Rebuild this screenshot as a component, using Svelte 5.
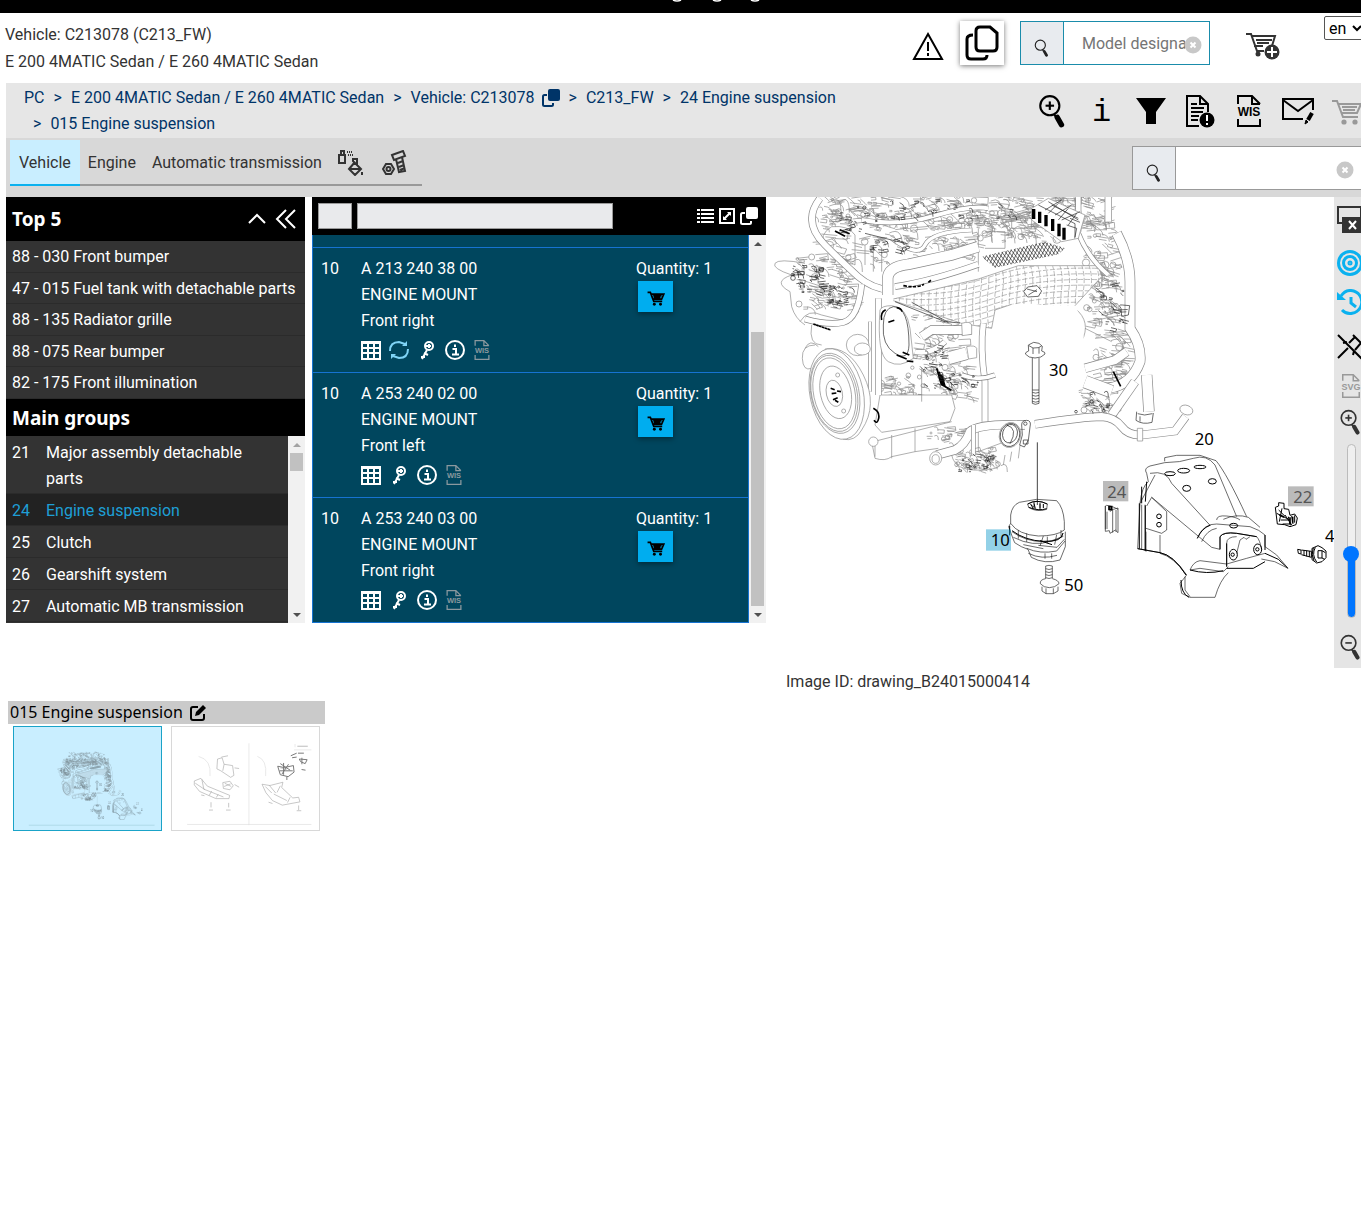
<!--
  Parts catalogue view: vehicle header, breadcrumb, group navigation, parts list
  and the exploded drawing with its zoom rail.
-->
<script lang="ts">
	const crumbs = [
		{ label: 'PC' },
		{ label: 'E 200 4MATIC Sedan / E 260 4MATIC Sedan' },
		{ label: 'Vehicle: C213078', copy: true },
		{ label: 'C213_FW' },
		{ label: '24 Engine suspension' },
		{ label: '015 Engine suspension' }
	];

	const topFive = [
		'88 - 030 Front bumper',
		'47 - 015 Fuel tank with detachable parts',
		'88 - 135 Radiator grille',
		'88 - 075 Rear bumper',
		'82 - 175 Front illumination'
	];

	const groups = [
		{ id: '21', name: 'Major assembly detachable parts' },
		{ id: '24', name: 'Engine suspension' },
		{ id: '25', name: 'Clutch' },
		{ id: '26', name: 'Gearshift system' },
		{ id: '27', name: 'Automatic MB transmission' }
	];

	const parts = [
		{ pos: '10', number: 'A 213 240 38 00', side: 'Front right', replaced: true },
		{ pos: '10', number: 'A 253 240 02 00', side: 'Front left', replaced: false },
		{ pos: '10', number: 'A 253 240 03 00', side: 'Front right', replaced: false }
	];

	let activeTab = $state('Vehicle');
	let activeGroup = $state('24');
	let zoom = $state(35);

	// Small hardware on the engine block: seeded, so every render is identical.
	let seed = 7;
	function rnd() {
		seed = (seed * 16807) % 2147483647;
		return seed / 2147483647;
	}

	// [cx, cy, rx, ry, count, size]
	type Area = [number, number, number, number, number, number];

	function hardware(areas: Area[]) {
		let d = '';
		for (const [cx, cy, rx, ry, count, size] of areas) {
			for (let i = 0; i < count; i++) {
				const x = Math.round(cx + (rnd() * 2 - 1) * rx);
				const y = Math.round(cy + (rnd() * 2 - 1) * ry);
				const s = Math.round(size * (0.3 + rnd() * 1.2));
				const t = Math.round(s * (rnd() * 2 - 1));
				const kind = rnd();
				if (kind < 0.12) {
					const r = Math.max(3, Math.round(s / 3));
					d += `M${x - r} ${y}a${r} ${r} 0 1 0 ${r * 2} 0a${r} ${r} 0 1 0 ${-r * 2} 0`;
				} else if (kind < 0.45) {
					d += `M${x} ${y}q${s} ${-t} ${s} ${s}`;
				} else if (kind < 0.7) {
					d += `M${x} ${y}l${s} ${-t / 3}l${t / 4} ${s / 2}l${-s} ${t / 3}`;
				} else {
					d += `M${x} ${y}l${s * 1.5} ${-t / 2}m-4 7l${-s} ${t / 3}`;
				}
			}
		}
		return d;
	}

	const fineMarks = hardware([
		[600, 50, 430, 50, 260, 24],
		[600, -60, 360, 70, 110, 30],
		[260, 120, 120, 90, 60, 26],
		[480, 120, 150, 60, 70, 22],
		[760, 90, 120, 50, 60, 24],
		[180, 260, 90, 80, 80, 22],
		[500, 430, 80, 80, 60, 24],
		[520, 560, 90, 50, 60, 20],
		[1005, 300, 40, 80, 60, 24],
		[1030, 480, 50, 80, 50, 28],
		[540, 720, 60, 25, 20, 18],
		[640, 790, 70, 30, 50, 16],
		[390, 570, 60, 30, 26, 22],
		[1000, 150, 50, 80, 36, 24],
		[990, 620, 60, 35, 30, 20]
	]);

	const boldMarks = hardware([
		[280, 60, 60, 50, 16, 12],
		[550, 40, 200, 30, 34, 10],
		[120, 250, 45, 40, 34, 14],
		[220, 300, 35, 30, 26, 10],
		[370, 150, 60, 20, 16, 12],
		[500, 510, 40, 70, 20, 12],
		[1020, 330, 50, 70, 20, 14],
		[640, 800, 60, 24, 22, 10],
		[980, 620, 50, 30, 14, 12],
		[580, 560, 60, 25, 16, 12]
	]);

	// Hoses and pipes lie over the hardware: [path, diameter]
	const pipes: [string, number][] = [
		['M165 10Q110 80 180 150Q240 210 280 245T375 285', 22],
		['M290 75Q400 95 510 62T670 40', 16],
		['M380 130Q460 190 480 150T620 105', 14],
		['M368 300V250Q370 215 430 208L560 180 640 155', 34],
		['M390 275Q500 258 640 208', 20],
		['M120 372Q190 392 235 382Q280 370 290 268', 20],
		['M340 310V600', 20],
		['M315 380V590', 12],
		['M940 115Q970 190 1030 240', 16],
		['M1030 0V80', 22],
		['M940 0V110', 18],
		['M1055 115Q1095 190 1095 260V400Q1130 450 1125 500Q1100 570 1030 580', 32],
		['M960 520 1050 495 1085 470', 28],
		['M960 560 1040 590', 40],
		['M620 405H500L470 425', 28],
		['M605 475 550 490', 40],
		['M450 470Q500 480 540 440', 18],
		['M655 385Q645 460 660 560V680', 20],
		['M690 540Q640 560 590 540', 16],
		['M1145 540 1152 650', 34],
		['M1110 560 1040 660', 28],
		['M810 688Q960 665 1010 665Q1050 668 1070 695T1130 720L1230 708 1262 665', 26],
		['M515 780 570 765Q600 750 615 710 640 685 780 690', 28],
		['M625 690V780', 14]
	];

	let coverMesh = '';
	for (let i = 0; i < 34; i++) {
		const x = 380 + i * 22;
		coverMesh += `M${x} 170q34 50 26 110t4 140`;
	}
	for (let i = 0; i < 14; i++) {
		const y = 240 + i * 17;
		coverMesh += `M380 ${y}q150 20 300 -30t340 -40`;
	}

	let grille = '';
	for (let i = 0; i < 26; i++) {
		grille += `M${640 + i * 11} 230l50 -100M${620 + i * 11} 140l70 90`;
	}
</script>

{#snippet magnifier(size: number, sign = '')}
	<svg width={size} height={size} viewBox="0 0 32 32" fill="none" stroke="currentColor" aria-hidden="true">
		<circle cx="13" cy="11" r="9" stroke-width="2" />
		{#if sign}<path d="M9 11h8" stroke-width="2" />{/if}
		{#if sign === '+'}<path d="M13 7v8" stroke-width="2" />{/if}
		<path d="m17 19 2 3" stroke-width="2" />
		<path d="m20 22 4 7" stroke-width="5" stroke-linecap="round" />
	</svg>
{/snippet}

{#snippet cart(size: number, weight = 2)}
	<svg width={size} height={size} viewBox="0 0 32 32" fill="none" stroke="currentColor" stroke-width={weight} aria-hidden="true">
		<path d="M1 6h5l6 16h15M7 9h23l-4 9H11M11 12h15M12 15h12" />
		<circle cx="13" cy="27" r="2.6" fill="currentColor" stroke="none" />
		<circle cx="24" cy="27" r="2.6" fill="currentColor" stroke="none" />
	</svg>
{/snippet}

{#snippet sheet(label: string, width: number, height: number)}
	<svg {width} {height} viewBox="0 0 26 32" fill="none" stroke="currentColor" stroke-width="2" aria-hidden="true">
		<path d="M2 9V1h14l8 8M16 1v8h8M2 24v7h22v-7" />
		<text x="13" y="21" text-anchor="middle" class="sheet-label">{label}</text>
	</svg>
{/snippet}

{#snippet copySolid(size: number)}
	<svg width={size} height={size} viewBox="0 0 18 18" aria-hidden="true">
		<rect x="6" y="0" width="12" height="12" rx="2" fill="currentColor" />
		<path d="M5 6H2.500Q1 6 1 7.500V15.500Q1 17 2.500 17H9.500Q11 17 11 15.500V14" fill="none" stroke="currentColor" stroke-width="2" />
	</svg>
{/snippet}

{#snippet clearIcon()}
	<svg width="18" height="18" viewBox="0 0 18 18" aria-hidden="true">
		<circle cx="9" cy="9" r="8.500" fill="#c8c8c8" />
		<path d="m6.500 6.500 5 5m0-5-5 5" stroke="#fff" stroke-width="2" />
	</svg>
{/snippet}

{#snippet drawing()}
	<g class="ink">
		<!-- engine block -->
		<g class="faint">
			<path d={fineMarks} />
			<path class="blank" d="M385 312 640 252 760 212 1000 212 1010 245 930 332 740 328 690 345 680 400 590 385 540 370Z" />
			<path class="mesh" d={coverMesh} clip-path="url(#cover)" stroke-dasharray="16 5" />
			<path d="M385 312 640 252 760 212 1000 212 1010 245 930 332M740 328l-50 17-10 55-90-15-205-68" />
			<path d="M80 240Q20 220 30 205T120 205M80 240Q20 260 75 290L80 335Q90 370 120 390M200 95Q160 120 180 150Q200 170 270 210V120Q250 90 200 95ZM300 150V210M325 150V230M350 160V230" />
			<path d="M640 100V230M660 110h60v50h-60M680 110v30M740 100h60v-30h-60zM105 380Q130 340 170 360L250 380M140 390Q130 450 170 450" />
			<path class="blank outline" d="M345 600H560L570 640 555 680 350 712 330 690Z" />
			<path d="M320 740L330 790Q360 800 380 785L450 770M325 740 560 680M330 745V785M380 720V790M450 700V770L520 760M470 520V620M640 700V770L720 740M560 780Q570 830 650 825T690 800M720 780 715 810M740 770 735 800M765 750 760 790" />
			<path d="M960 400 1040 440M970 380 1070 360Q1100 380 1090 420L990 430M930 340Q980 380 950 440" />
		</g>
		<path class="blank" d="M705 350 935 335 955 420 965 500 940 590 960 620 910 655 720 660 682 560V400Z" />
		<g class="faint">
			{#each pipes as [d, size]}
				<path {d} stroke-width={size} />
				<path {d} stroke-width={size - 4} class="bore" />
			{/each}
			<ellipse class="blank outline" cx="1264" cy="645" rx="20" ry="14" transform="rotate(20 1264 645)" />
			<ellipse class="blank outline" cx="512" cy="790" rx="18" ry="20" />
			<ellipse cx="512" cy="792" rx="11" ry="13" />
			<path class="blank outline" d="M590 385q25-8 30 5v28l-28 4zM605 455q25-6 30 5v28l-24 4zM1117 700h16v38h-16z" />
		</g>
		<!-- belt pulley -->
		<g class="faint">
			<path class="blank outline" d="M180 462Q250 450 295 540T290 705Q270 740 235 733Z" />
			<path d="M150 450Q110 450 112 490T140 520M120 460Q135 430 160 455" />
			<ellipse class="blank outline" cx="215" cy="597" rx="80" ry="138" transform="rotate(-12 215 597)" />
			<ellipse cx="210" cy="595" rx="72" ry="122" transform="rotate(-12 210 595)" />
			<ellipse cx="208" cy="595" rx="68" ry="116" transform="rotate(-12 208 595)" />
			<ellipse cx="208" cy="595" rx="62" ry="108" transform="rotate(-12 208 595)" />
			<ellipse cx="212" cy="592" rx="46" ry="80" transform="rotate(-12 212 592)" />
			<ellipse cx="208" cy="595" rx="24" ry="40" transform="rotate(-12 208 595)" />
			<circle cx="218" cy="540" r="6" />
			<circle cx="236" cy="648" r="6" />
			<ellipse class="blank outline" cx="278" cy="450" rx="34" ry="32" />
			<ellipse class="blank outline" cx="292" cy="462" rx="24" ry="18" />
			<circle class="blank outline" cx="325" cy="740" r="14" />
		</g>
		<path class="heavy" d="M197 580l12 4m-9 12 14-2m-10 20 14-6m-2-20 12 2m-18 26 10 6M325 640q20 10 16 30t-14 6M1045 530l22 44M210 108l30 16m-16-20 30 12" />
		<path class="heavy" d="M145 387l52 18" stroke-dasharray="8 1" />
		<!-- oil filter -->
		<path class="blank outline" d="M345 345Q335 480 370 500T445 490L435 400Q425 335 380 332Q350 332 345 345Z" />
		<path d="M355 390Q350 450 390 475T432 450Q432 335 385 335Q355 340 355 390M390 320l150 60 45 4M440 322l110 60M300 115l80 20 50 12" />
		<path class="heavy" d="M350 375Q345 352 362 344M395 338q14 2 16 12M370 382l18-6M395 480l30 12m-12-20 20 8m-8 18 20 2" />
		<path class="heavy" d="M515 520l14 48 30 18M522 530l14 44M530 540l10 34" />
		<path class="heavy" d="M415 272q40 8 62 -4M490 262l10-8" stroke-dasharray="10 4" />
		<!-- valve cover -->
		<path class="blank outline" d="M800 40 850 10 960 60 940 130 890 140 800 75Z" />
		<path d="M820 30l110 56v40M850 20l90 55M870 60l50-30M890 75l55-25M840 45l50-30M860 30l80 40M880 25l-30 30M910 40l-30 35M935 55l-25 35M905 90l30 10-6 30M915 70l30 12" />
		<path class="slots" d="M806 42v30M824 50v34M843 60v34M863 72v36M882 86v38M897 98v36" />
		<path d={grille} clip-path="url(#vents)" />
		<path d={boldMarks} />
		<g>
			<ellipse class="blank outline" cx="735" cy="720" rx="32" ry="38" transform="rotate(15 735 720)" />
			<ellipse cx="735" cy="720" rx="29" ry="35" transform="rotate(15 735 720)" />
			<ellipse cx="735" cy="716" rx="22" ry="28" transform="rotate(15 735 716)" />
			<path d="M725 690q36 10 10 56M770 690q0-14 15-14t10 20l-5 40-12 20-14-6 8-30zM775 735h14v12h-14z" />
			<circle cx="781" cy="686" r="5" />
			<path d="M1068 340q-10-12 4-10l22 2-4 28-20 4zM1115 650l-2 26q20 14 48 6l4-28M1118 656q20 8 44 0M1125 664v16" />
			<path class="blank" d="M776 290l12-14 28-4 14 16-10 16-32 2z" />
			<path d="M776 290l12-14 28-4 14 16-10 16-32 2zM786 282l30 8M790 300l26-16" />
		</g>
		<!-- bolt 30 -->
		<path d="M790 450l16-8 16 3 10 9-2 14q12 3 10 9-10 12-30 12t-29-12q0-6 10-9zM792 452l12 7 16-1 10-5M804 459v18M822 457v19M802 489V625q8 6 20 0V489M802 585h20M802 592q10 5 20 0M802 601q10 5 20 0M802 610q10 5 20 0M802 619q10 5 20 0" />
		<path class="lead" d="M817 742V930" />
		<g transform="translate(585 675)">
			<!-- engine mount 10 -->
			<path d="M152 310V285Q156 256 178 247L230 238 290 242Q310 262 313 305V330Q290 348 235 348 175 344 152 310ZM203 252Q230 236 262 252L260 268Q230 278 206 262ZM212 255l12 6M240 250v16M222 246v20M152 310l-6 10 10 28 8 20q20 14 40 20l10 24q40 22 86 8L316 380V335M156 335q40 30 95 30t58-25M160 352q60 30 110 12l40-15M175 330v26M200 340v26M250 348l-10 30M262 350v20M290 344l-6 30M303 330v22M200 385q40 18 90 8l25-30M205 400q40 20 86 6M255 400v16M275 400v16M235 376l56 6 22-24M190 374l60 12" />
			<path class="medium" d="M149 318v28M156 332q40 30 95 32t58-25M203 252Q230 236 262 252M206 262q30 12 54 4M212 252l8 14M222 250l4 16M240 250v16M250 252v12M240 362l36 12" />
			<!-- bolt 50 -->
			<path d="M257 438q10-4 20 0V475M257 438v38M257 446q10 5 20 0M257 455q10 5 20 0M257 464q10 5 20 0M257 473q10 5 20 0M257 476q-18 3-16 15 10 12 27 12t29-12q0-10-20-15M246 500v13l12 8h22l14-8v-13M258 505v16M280 505v16" />
			<!-- clip 24 -->
			<path d="M436 258l4-2 10 2v16l10-6 14-4v74l-8-8-16 10-2-8-12 2zM441 275v52M458 268v70M436 258v70M450 258l12 4 12 6M468 270v66" />
			<path class="heavy" d="M447 260h8v8h-8z" />
			<!-- bracket 20 -->
			<path d="M614 124V113L650 106H720L768 122Q800 160 860 290M614 128Q660 128 700 115T765 135L830 290M614 128 570 138Q550 145 560 160L565 185Q545 200 540 250L533 386 600 398Q640 405 680 465L660 490 665 520 690 532H765Q780 480 805 458M570 160Q620 150 635 190L752 318M540 250 585 165M545 254V390M555 254V392M560 258 575 232 620 275V330L605 340 558 325M558 335V395M600 345V400M575 232l180 150 25 6M600 400q40 10 78 64M675 470V510L690 530M690 450Q700 425 720 422L800 432 860 415 915 400M690 450 720 445 790 455 805 440M712 355Q730 310 770 312L870 320Q900 330 915 345V380M725 365Q740 330 770 325M780 388V350Q790 335 830 340L890 350Q900 360 905 390M800 440V370Q800 350 830 350M830 400l10-40 12-8 6 6 12-8M770 300Q770 285 800 288T840 300M790 298Q830 280 865 292L900 322M915 380l35 25 34 40-40-20-40-8" />
			<g class="medium">
				<ellipse cx="680" cy="205" rx="12" ry="9" />
				<ellipse cx="757" cy="184" rx="12" ry="8" />
				<ellipse cx="630" cy="161" rx="16" ry="6" />
				<ellipse cx="671" cy="152" rx="18" ry="7" />
				<ellipse cx="720" cy="141" rx="18" ry="5" />
				<ellipse cx="821" cy="317" rx="12" ry="7" />
				<circle cx="597" cy="289" r="7" />
				<circle cx="597" cy="314" r="7" />
				<ellipse cx="820" cy="404" rx="12" ry="16" />
				<ellipse cx="893" cy="388" rx="12" ry="16" />
				<circle cx="818" cy="404" r="5" />
				<circle cx="892" cy="388" r="5" />
				<path d="M533 386 600 398Q640 405 678 465M538 250V386M556 256V392M545 200V250M560 185l-4 60M712 355Q725 325 750 316M780 388V350Q790 335 830 340L890 350M800 440V370M915 345V390M800 445h80l35-20M915 400l40 18 28 26M690 450q50 14 100 2M663 480q0 40 24 52" />
			</g>
			<!-- nut 22 -->
			<path class="medium" d="M946 262l10-4v-10l16 2v16l14 2 4 18 14-4 8 12-4 20-18 6-16-6-22-2zM956 270l20 20M966 265l-8 40M975 285l20 30M985 290l6 26M995 288l4 24M950 280l40 20M962 300h24M968 312h26M1004 286v22" />
			<path class="heavy" d="M958 284l14 8M990 292v20M998 290v18" />
			<!-- bolt 40 -->
			<path class="medium" d="M1013 388l10 2v12l-8-2zM1024 390l30 4v18l-30-8M1032 391v16M1040 392v17M1048 393v18M1056 385l18-8 12 6 12 10v20l-12 12-16 4-14-10zM1066 382q-12 22 4 44M1060 384q-8 20 2 38M1074 392h12v22h-12zM1086 392l10 6M1086 414l8 4" />
			<rect class="spot spot-active" x="78" y="328" width="75" height="64" />
			<rect class="spot" x="429" y="183" width="76" height="61" />
			<rect class="spot" x="984" y="199" width="77" height="60" />
			<g class="callouts">
				<text x="704" y="76">20</text>
				<text x="92" y="379">10</text>
				<text x="313" y="513">50</text>
				<text x="442" y="233" class="dim">24</text>
				<text x="1000" y="250" class="dim">22</text>
				<text x="1095" y="365">4</text>
			</g>
		</g>
		<text class="callouts" x="852" y="544">30</text>
	</g>
{/snippet}

<div class="page">
	<div class="banner">
		<svg width="96" height="2" viewBox="0 0 96 2" aria-hidden="true">
			<path d="M4 0q4 2 8 0M44 0q4 2 8 0M82 0q4 2 8 0" stroke="#fff" stroke-width="1.500" />
		</svg>
	</div>

	<header>
		<div class="vehicle">
			<div>Vehicle: C213078 (C213_FW)</div>
			<div>E 200 4MATIC Sedan / E 260 4MATIC Sedan</div>
		</div>
		<button class="plain" aria-label="Warnings">
			<svg width="32" height="30" viewBox="0 0 32 30" fill="none" stroke="#000" stroke-width="2">
				<path d="M16 3 30 28H2ZM16 11v9M16 22v3" />
			</svg>
		</button>
		<button class="raised" aria-label="Copy vehicle data">
			<svg width="34" height="36" viewBox="0 0 34 36" fill="none" stroke="#000" stroke-width="3">
				<path d="M15 2h10l7 6v14q0 4-4 4H15q-4 0-4-4V6q0-4 4-4ZM8 10Q2 10 2 14V30Q2 34 6 34H18Q22 34 22 30" />
			</svg>
		</button>
		<label class="search search-model">
			<span class="search-icon">{@render magnifier(18)}</span>
			<input type="text" placeholder="Model designation" aria-label="Model designation" />
			<button class="clear" aria-label="Clear model search">{@render clearIcon()}</button>
		</label>
		<button class="plain add-cart" aria-label="Add to cart">
			<svg width="34" height="30" viewBox="0 0 34 30" fill="none" stroke="#333" stroke-width="2">
				<path d="M0 3h5l6 17h7M6 5h23l-3 10M8 15h9M10 9h16M11 12h12" />
				<circle cx="12" cy="23" r="2.500" fill="#333" stroke="none" />
				<circle cx="26" cy="21" r="7.500" fill="#333" stroke="none" />
				<path d="M26 16v10M21 21h10" stroke="#fff" />
			</svg>
		</button>
		<select aria-label="Language"><option>en</option><option>de</option></select>
	</header>

	<div class="crumb-bar">
		<nav aria-label="Breadcrumb">
			{#each crumbs as crumb, i}
				<span class="crumb">
					{#if i}<span class="sep">&gt;</span>{/if}<a href="#crumb-{i}">{crumb.label}</a>
					{#if crumb.copy}{@render copySolid(18)}{/if}
				</span>
			{/each}
		</nav>
		<div class="tools">
			<button aria-label="Zoom in">{@render magnifier(34, '+')}</button>
			<button class="info" aria-label="Information">i</button>
			<button aria-label="Filter">
				<svg width="32" height="28" viewBox="0 0 32 28"><path d="M1 1h30L21 15v12H11V15Z" /></svg>
			</button>
			<button aria-label="Document notes">
				<svg width="30" height="34" viewBox="0 0 30 34" fill="none" stroke="#000" stroke-width="2">
					<path d="M14 32H2V2h13l8 8v8M15 2v8h8M6 10h6M6 14h13M6 18h12M6 22h8M6 26h7" />
					<circle cx="22" cy="26" r="7.500" fill="#000" stroke="none" />
					<path d="M22 21v6M22 29v2" stroke="#fff" />
				</svg>
			</button>
			<button aria-label="WIS">{@render sheet('WIS', 26, 32)}</button>
			<button aria-label="Message">
				<svg width="34" height="30" viewBox="0 0 34 30" fill="none" stroke="#000" stroke-width="2">
					<path d="M22 23H2V3h30v11M2 4l15 11L32 4" />
					<path d="m24 28 1-4 2 2z" fill="#000" stroke-width="1" />
					<path d="m27 24 4-7" stroke-width="4" />
				</svg>
			</button>
			<button class="disabled" aria-label="Cart" disabled>{@render cart(32)}</button>
		</div>
	</div>

	<div class="tab-bar">
		<div class="tabs" role="tablist">
			{#each ['Vehicle', 'Engine', 'Automatic transmission'] as tab}
				<button role="tab" aria-selected={tab === activeTab} class={['tab', tab === activeTab && 'active']} onclick={() => (activeTab = tab)}>{tab}</button>
			{/each}
			<button role="tab" class="tab" aria-selected="false" aria-label="Paint and fluids">
				<svg width="26" height="26" viewBox="0 0 26 26" fill="none" stroke="#333" stroke-width="2">
					<path d="M1 5h6v8H1zM3 5V1h3v4" />
					<path d="M9 2h6M10 5h5" stroke-dasharray="1 1" />
					<path d="M17 12l-6 7 6 6 6-6-8-8v-2h4v6M12 19h10M24 22v3" />
				</svg>
			</button>
			<button role="tab" class="tab" aria-selected="false" aria-label="Standard parts">
				<svg width="26" height="26" viewBox="0 0 26 26" fill="none" stroke="#333" stroke-width="2">
					<path d="M10 5l11-4 2 5-11 4zM14 9l3 13 6-1-3-14M16 13l5-2M17 17l5-2M18 20l5-2" />
					<path d="M4 14h5l3 5-3 5H4l-3-5z" />
					<circle cx="6.500" cy="19" r="2" />
				</svg>
			</button>
		</div>
		<label class="search search-part">
			<span class="search-icon">{@render magnifier(18)}</span>
			<input type="text" aria-label="Part search" />
			<button class="clear" aria-label="Clear part search">{@render clearIcon()}</button>
		</label>
	</div>

	<main>
		<aside>
			<div class="head top">
				<h2>Top 5</h2>
				<button aria-label="Collapse">
					<svg width="20" height="20" viewBox="0 0 20 20"><path d="m2 14 8-8 8 8" /></svg>
				</button>
				<button aria-label="Hide navigation">
					<svg width="22" height="20" viewBox="0 0 22 20"><path d="m11 1-9 9 9 9M20 1l-9 9 9 9" /></svg>
				</button>
			</div>
			<ul class="shortcuts">
				{#each topFive as item}<li><a href="#top">{item}</a></li>{/each}
			</ul>
			<div class="head"><h2>Main groups</h2></div>
			<div class="scroll groups-scroll">
				<ul class="groups">
					{#each groups as group}
						<li>
							<button class={{ current: group.id === activeGroup }} onclick={() => (activeGroup = group.id)}>
								<span>{group.id}</span><span>{group.name}</span>
							</button>
						</li>
					{/each}
				</ul>
				<div class="bar"><i class="up"></i><i class="thumb"></i><i class="down"></i></div>
			</div>
		</aside>

		<section class="parts">
			<div class="parts-head">
				<input class="pos-filter" type="text" aria-label="Filter by position" />
				<input class="text-filter" type="text" aria-label="Filter by text" />
				<div class="parts-tools">
					<button aria-label="List view">
						<svg width="18" height="18" viewBox="0 0 18 18" stroke="currentColor" stroke-width="2"><path d="M1 3h3M5 3h13M1 7h3M5 7h13M1 11h3M5 11h13M1 15h3M5 15h13" /></svg>
					</button>
					<button aria-label="Expand">
						<svg width="18" height="18" viewBox="0 0 18 18" fill="none" stroke="currentColor" stroke-width="2"><path d="M2 2h14v14H2zM6 12l6-6" /><path d="M9 5h4v4zM5 9v4h4z" fill="currentColor" stroke="none" /></svg>
					</button>
					<button aria-label="Copy list">{@render copySolid(18)}</button>
				</div>
			</div>
			<div class="scroll parts-scroll">
				<div class="rows">
					<div class="row-tail"></div>
					{#each parts as part}
						<article>
							<span class="pos">{part.pos}</span>
							<div class="desc">
								<div>{part.number}</div>
								<div>ENGINE MOUNT</div>
								<div>{part.side}</div>
								<div class="part-icons">
									<button aria-label="Table">
										<svg width="20" height="20" viewBox="0 0 20 20" fill="none" stroke="#fff" stroke-width="2"><path d="M1 2h18v17H1zM1 3h18M7 2v17M13 2v17M1 8h18M1 13h18" /></svg>
									</button>
									{#if part.replaced}
										<button aria-label="Replacements">
											<svg width="20" height="20" viewBox="0 0 20 20" fill="none" stroke="#7fd4f7" stroke-width="2">
												<path d="M1 11Q1 2 10 2L16 4M19 9Q19 18 10 18L4 16" />
												<path d="m13 6 5 0V1zM7 14H2v5z" fill="#7fd4f7" stroke="none" />
											</svg>
										</button>
									{/if}
									<button aria-label="Code">
										<svg width="20" height="20" viewBox="0 0 20 20" fill="none" stroke="#fff" stroke-width="2"><circle cx="12" cy="6" r="4" /><path d="M10 10 5 19M4 17h4M7 13l4 2M9 6h5M12 4v4" /></svg>
									</button>
									<button aria-label="Part information">
										<svg width="20" height="20" viewBox="0 0 20 20" fill="none" stroke="#fff" stroke-width="2"><circle cx="10" cy="10" r="9" /><path d="M7.500 9H11v5M7 14.500h7M10 4.500v2.500" /></svg>
									</button>
									<button class="wis" aria-label="Part WIS">{@render sheet('WIS', 18, 20)}</button>
								</div>
							</div>
							<div class="order">
								<span>Quantity: 1</span>
								<button aria-label="Order {part.number}">{@render cart(18, 3)}</button>
							</div>
						</article>
					{/each}
				</div>
				<div class="bar"><i class="up"></i><i class="thumb"></i><i class="down"></i></div>
			</div>
		</section>

		<section class="viewer">
			<div class="canvas">
				<svg class="sketch" viewBox="3 6 1704 1413" preserveAspectRatio="xMinYMin slice" role="img" aria-label="Engine suspension">
					<defs>
						<clipPath id="cover">
							<path d="M385 312 640 252 760 212 1000 212 1010 245 930 332 740 328 690 345 680 400 590 385 540 370Z" />
						</clipPath>
						<clipPath id="vents"><path d="M650 185 840 140 900 160 880 178 690 218Z" /></clipPath>
					</defs>
					{@render drawing()}
				</svg>
				<div class="rail">
					<button class="windows" aria-label="Close window">
						<svg width="28" height="28" viewBox="0 0 28 28" fill="none" stroke="#333" stroke-width="2"><path d="M1 1h23v16H1z" /><path d="M5 11h23v16H5z" fill="#333" stroke="none" /><path d="m12 15 7 8m0-8-7 8" stroke="#fff" /></svg>
					</button>
					<button class="target" aria-label="Centre">
						<svg width="26" height="26" viewBox="0 0 26 26" fill="none" stroke="#0ab1ef" stroke-width="3"><circle cx="13" cy="13" r="11.500" /><circle cx="13" cy="13" r="6.500" /><circle cx="13" cy="13" r="1" /></svg>
					</button>
					<button class="history" aria-label="History">
						<svg width="26" height="26" viewBox="0 0 26 26" fill="none" stroke="#0ab1ef" stroke-width="3"><path d="M4 7Q8 1 14 1.500A11.500 11.500 0 1 1 5 21M14 8v6l5 4" /><path d="M0 3v8h9z" fill="#0ab1ef" stroke="none" /></svg>
					</button>
					<button class="pin" aria-label="Unpin">
						<svg width="26" height="26" viewBox="0 0 26 26" fill="none" stroke="#000" stroke-width="2"><path d="M1 1l24 24M1 24l10-10M16 1l9 9M18 3l-6 6M24 9l-6 7M6 9l4-1M17 17l-1 4" /></svg>
					</button>
					<button class="svg-export" aria-label="Save drawing">{@render sheet('SVG', 20, 24)}</button>
					<button class="plus" aria-label="Enlarge">{@render magnifier(26, '+')}</button>
					<input type="range" min="0" max="100" bind:value={zoom} style="--level: {zoom}%" aria-label="Zoom" />
					<button class="minus" aria-label="Reduce">{@render magnifier(26, '-')}</button>
				</div>
			</div>
			<p>Image ID: drawing_B24015000414</p>
		</section>
	</main>

	<section class="sheets">
		<h3>
			015 Engine suspension
			<svg width="16" height="16" viewBox="0 0 16 16" fill="none" stroke="#000" stroke-width="2" aria-hidden="true"><path d="M8 2H3Q1 2 1 4v9q0 2 2 2h9q2 0 2-2V9" /><path d="m5 11 1-4 7-7 3 3-7 7z" fill="#000" stroke="none" /></svg>
		</h3>
		<div class="thumbs">
			<button class="selected" aria-label="Drawing 1">
				<svg viewBox="-824 -625 2893 2040">
					{@render drawing()}
					<path class="rule" d="M-540 1320H1950" />
				</svg>
			</button>
			<button aria-label="Drawing 2">
				<svg viewBox="0 0 447 315" fill="none" stroke="#aaa" stroke-width="2">
					<path stroke="#ddd" d="M234 50V300M45 298H425M372 70H425M375 52v10M80 90q40 10 35 60M260 90q30 10 25 60" />
					<path stroke="#ccc" stroke-width="4" d="M382 59h32" />
					<path d="M138 98l14-4 6 20 26 4 4 30-10 6-30-20-12-6zM150 92l20-4M158 114l-4 20M190 125l14 2M67 165l20-8 20 24 68 28-2 10h-40l-50-22-16-20zM70 172l30 20M90 160l6 30 60 24M120 196l-8 14M140 206l-6 10M154 170l22-4 10 14-10 12-20-4zM160 172l20 10M158 182l20-8M190 176l14 8M118 230v16M112 254h12M172 232v14M164 254h14M88 208l10 2" />
					<path d="M274 175l24 4 40-10-4 16 34 32 18-2 4 14-54 10-30-14-20-24zM284 182l20 20M296 178l20 24M330 180l-10 20M310 205l40 20M360 215l-8 16M386 240v14M380 256h14M330 125l20 4M294 230l12 4" />
					<path stroke="#777" stroke-width="3" d="M322 120l20 4 28-6 2 20-18 14-24-6zM330 112l30 20M340 110v36M355 114l-20 30M362 88l18-8M366 94l14-2M388 98l24 2-6 12-14-6zM396 94v20M395 130l12 2M350 152v10M384 80h18M328 134h40" />
				</svg>
			</button>
		</div>
	</section>
</div>

<style>
	:global(body) {
		margin: 0;
		overflow-x: hidden;
		background: #fff;
		color: #333;
		font: 16px/26px Roboto, Arial, sans-serif;
	}

	.page {
		overflow: hidden;
	}

	button {
		padding: 0;
		border: 0;
		background: none;
		color: inherit;
		font: inherit;
	}

	svg {
		display: block;
		flex: none;
	}

	a {
		color: inherit;
		text-decoration: none;
	}

	ul,
	p,
	h2,
	h3 {
		margin: 0;
		padding: 0;
		list-style: none;
	}

	input,
	select {
		box-sizing: border-box;
		font: inherit;
	}

	.banner {
		display: flex;
		justify-content: center;
		height: 13px;
		padding-left: 72px;
		background: #000;
	}

	header {
		display: flex;
		align-items: flex-start;
		height: 70px;
	}

	.vehicle {
		flex: 1;
		padding: 8px 0 0 5px;
		line-height: 27px;
	}

	.plain {
		margin-top: 18px;
	}

	.raised {
		display: grid;
		place-items: center;
		width: 44px;
		height: 44px;
		margin: 8px 16px 0;
		box-shadow: 0 1px 5px #0008;
	}

	.search {
		display: flex;
		box-sizing: border-box;
		position: relative;
		height: 44px;
		border: 1px solid #999;
		background: #fff;
	}

	.search-icon {
		display: grid;
		place-items: center;
		width: 43px;
		padding-top: 10px;
		box-sizing: border-box;
		border-right: 1px solid #999;
		background: #e8ebef;
		color: #222;
	}

	.search input {
		flex: 1;
		min-width: 0;
		padding: 2px 24px 0 18px;
		border: 0;
		outline: 0;
		background: transparent;
	}

	.search input::placeholder {
		color: #757575;
	}

	.clear {
		position: absolute;
		top: 14px;
		right: 7px;
	}

	.search-model {
		width: 190px;
		margin-top: 8px;
		border-color: #1a8cab;
	}

	.search-model .search-icon {
		border-color: #1a8cab;
	}

	.add-cart {
		margin-left: 36px;
	}

	select {
		width: 42px;
		height: 24px;
		margin: 3px -5px 0 44px;
		padding: 0;
		border: 1px solid #555;
		border-radius: 2px;
		background: #fff;
		color: #000;
	}

	.crumb-bar {
		display: flex;
		margin-left: 6px;
		background: #e6e6e6;
	}

	nav {
		flex: 1;
		padding: 2px 24px 1px 18px;
		color: #003468;
	}

	.crumb {
		display: inline-flex;
		align-items: center;
	}

	.crumb svg {
		margin-left: 7px;
	}

	.sep {
		margin: 0 9px;
	}

	.tools {
		display: flex;
		margin-right: -10px;
		color: #000;
	}

	.tools button {
		display: grid;
		place-items: center;
		width: 49px;
	}

	.tools .info {
		padding-top: 4px;
		font: 32px "Liberation Mono", monospace;
	}

	.tools .disabled {
		color: #999;
	}

	.sheet-label {
		fill: currentColor;
		stroke: none;
		font: bold 12px "Liberation Sans", sans-serif;
	}

	.tab-bar {
		display: flex;
		justify-content: space-between;
		height: 59px;
		margin-left: 6px;
		padding-left: 4px;
		box-sizing: border-box;
		background: #d8d8d8;
	}

	.tabs {
		display: flex;
		height: 46px;
		margin-top: 2px;
	}

	.tab {
		padding: 2px 8px 0;
		border-bottom: 2px solid #999;
	}

	.tab:last-child {
		padding: 2px 14px 0 10px;
	}

	.tab.active {
		padding: 2px 9px 0;
		border-color: #0ab1ef;
		background: #c9eeff;
	}

	.search-part {
		width: 237px;
		margin: 8px -8px 0 0;
	}

	.search-part .clear {
		right: 14px;
	}

	main {
		display: flex;
		align-items: flex-start;
		margin-left: 6px;
	}

	aside {
		flex: none;
		width: 299px;
		margin-right: 7px;
		background: #333;
		color: #fff;
	}

	.head {
		display: flex;
		align-items: center;
		gap: 8px;
		height: 37px;
		padding: 0 8px 0 6px;
		background: #000;
	}

	.head.top {
		height: 44px;
	}

	.head h2 {
		flex: 1;
		font: bold 19px/26px "Noto Sans", sans-serif;
	}

	.head svg {
		fill: none;
		stroke: #fff;
		stroke-width: 2;
	}

	.shortcuts {
		display: grid;
		grid-auto-rows: 1fr;
		height: 158px;
	}

	.shortcuts li {
		padding: 3px 6px 0;
		border-bottom: 1px solid #2b2b2b;
		white-space: nowrap;
	}

	.scroll {
		display: flex;
		overflow: hidden;
	}

	.groups-scroll {
		height: 187px;
	}

	.groups {
		flex: 1;
	}

	.groups button {
		display: grid;
		grid-template-columns: 34px 1fr;
		width: 100%;
		padding: 4px 6px 1px;
		border-bottom: 1px solid #2b2b2b;
		text-align: left;
	}

	.groups .current {
		background: #222;
		color: #1e9fd6;
	}

	.bar {
		display: flex;
		flex: none;
		flex-direction: column;
		align-items: center;
		width: 17px;
		background: #f1f1f1;
	}

	.bar .up,
	.bar .down {
		margin: 7px 0 6px;
		border: 4px solid transparent;
		border-top: 0;
		border-bottom-color: #505050;
	}

	.bar .down {
		margin-top: auto;
		border-top: 4px solid #505050;
		border-bottom: 0;
	}

	.bar .thumb {
		width: 13px;
		height: 18px;
		background: #c1c1c1;
	}

	.groups-scroll .up {
		border-bottom-color: #a3a3a3;
	}

	.parts {
		flex: none;
		width: 454px;
		color: #fff;
	}

	.parts-head {
		display: flex;
		align-items: center;
		height: 38px;
		padding: 0 8px 0 6px;
		box-sizing: border-box;
		background: #000;
	}

	.parts-head input {
		height: 26px;
		padding: 0 4px;
		border: 1px solid #999;
		background: #e9eaec;
	}

	.pos-filter {
		width: 34px;
		margin-right: 5px;
	}

	.text-filter {
		width: 256px;
	}

	.parts-tools {
		display: flex;
		gap: 4px;
		margin-left: auto;
	}

	.parts-scroll {
		height: 388px;
	}

	.rows {
		flex: 1;
		border: solid #1673d1;
		border-width: 0 1px;
		background: #00465e;
	}

	.row-tail {
		height: 12px;
		border-bottom: 1px solid #1673d1;
	}

	article {
		display: grid;
		grid-template-columns: 40px 1fr 112px;
		height: 125px;
		padding: 8px 0 0 8px;
		box-sizing: border-box;
		border-bottom: 1px solid #1673d1;
	}

	.part-icons {
		display: flex;
		align-items: center;
		gap: 8px;
		height: 32px;
	}

	.wis {
		color: #8b999f;
	}

	.order button {
		display: grid;
		place-items: center;
		width: 35px;
		height: 31px;
		margin-left: 2px;
		padding-top: 2px;
		background: #00adef;
		box-shadow: 0 2px 5px #0006;
		color: #000;
	}

	.order span {
		display: block;
		line-height: 25px;
	}

	.parts-scroll .thumb {
		height: 274px;
		margin-top: 80px;
	}

	.viewer {
		flex: 1;
		min-width: 0;
	}

	.viewer p {
		padding: 1px 0 0 20px;
		line-height: 25px;
	}

	.canvas {
		display: flex;
		height: 471px;
	}

	.sketch {
		flex: 1;
		min-width: 0;
		height: 471px;
	}

	.ink {
		fill: none;
		stroke: #222;
		stroke-width: 2;
	}

	.faint {
		stroke: #888;
	}

	.mesh {
		stroke: #999;
	}

	.bore {
		stroke: #fff;
	}

	.medium {
		stroke: #000;
		stroke-width: 3;
	}

	.heavy {
		stroke: #000;
		stroke-width: 5;
	}

	.slots {
		stroke: #000;
		stroke-width: 10;
	}

	.lead {
		stroke: #444;
		stroke-width: 3;
	}

	.blank {
		fill: #fff;
		stroke: none;
	}

	.blank.outline {
		stroke: #888;
	}

	.spot {
		fill: #0004;
		stroke: none;
	}

	.spot-active {
		fill: #0a96c870;
	}

	.callouts {
		fill: #000;
		stroke: none;
		font: 50px "Noto Sans", sans-serif;
	}

	.callouts .dim {
		fill: #555;
	}

	.rail {
		display: flex;
		flex: none;
		flex-direction: column;
		align-items: flex-start;
		box-sizing: border-box;
		width: 27px;
		padding: 9px 0 0 3px;
		overflow: hidden;
		background: #e5e5e5;
		color: #333;
	}

	.target {
		margin-top: 16px;
	}

	.history {
		margin-top: 13px;
	}

	.pin {
		margin-top: 19px;
	}

	.svg-export {
		margin: 14px 0 0 4px;
		color: #999;
	}

	.plus {
		margin: 11px 0 0 1px;
	}

	.minus {
		margin-left: 1px;
	}

	.rail input {
		appearance: none;
		writing-mode: vertical-lr;
		direction: rtl;
		width: 9px;
		height: 174px;
		margin: 9px 0 16px 10px;
		border: 1px solid #bbb;
		border-radius: 5px;
		background: linear-gradient(to top, #0075ff var(--level), #efefef var(--level));
	}

	.rail input::-webkit-slider-thumb {
		appearance: none;
		width: 16px;
		height: 16px;
		margin-left: -2px;
		border-radius: 50%;
		background: #0075ff;
	}

	.sheets {
		width: 317px;
		margin: 7px 0 0 8px;
	}

	h3 {
		display: flex;
		align-items: center;
		gap: 7px;
		padding-left: 2px;
		background: #cacaca;
		color: #000;
		font: 16px/23px "Noto Sans", sans-serif;
	}

	.thumbs {
		display: flex;
		gap: 9px;
		padding: 2px 5px;
	}

	.thumbs button {
		flex: 1;
		border: 1px solid #d8d8d8;
	}

	.thumbs svg {
		width: 100%;
		height: 103px;
	}

	.thumbs .selected {
		border-color: #1aa3c8;
		background: #c9eeff;
	}

	.selected .ink {
		opacity: 0.5;
		stroke-width: 6;
	}

	.selected .faint {
		stroke: #444;
	}

	.selected .blank,
	.selected .spot {
		fill: #c9eeff;
	}

	.selected .bore {
		stroke: #c9eeff;
	}

	.rule {
		stroke: #a9d4e2;
		stroke-width: 16;
	}
</style>
